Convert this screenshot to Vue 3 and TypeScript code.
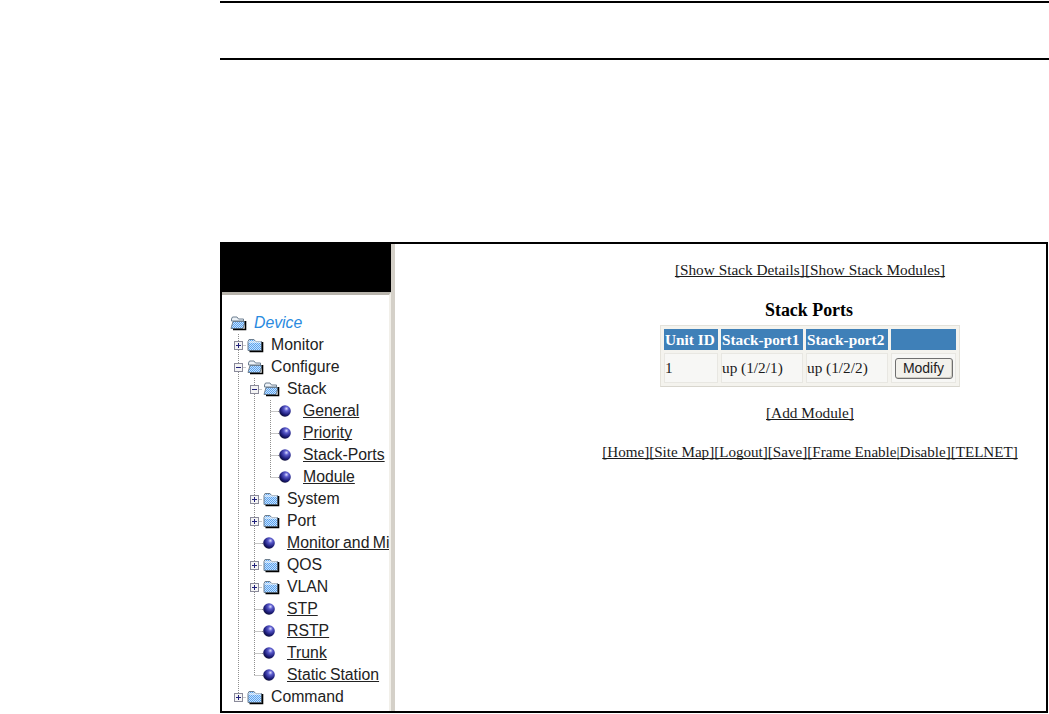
<script setup lang="ts">
type Kind = 'root' | 'plus' | 'minus' | 'leaf'

interface TreeRow {
  label: string
  depth: number
  kind: Kind
  last?: boolean
}

const rows: TreeRow[] = [
  { label: 'Device', depth: 0, kind: 'root' },
  { label: 'Monitor', depth: 0, kind: 'plus' },
  { label: 'Configure', depth: 0, kind: 'minus' },
  { label: 'Stack', depth: 1, kind: 'minus' },
  { label: 'General', depth: 2, kind: 'leaf' },
  { label: 'Priority', depth: 2, kind: 'leaf' },
  { label: 'Stack-Ports', depth: 2, kind: 'leaf' },
  { label: 'Module', depth: 2, kind: 'leaf', last: true },
  { label: 'System', depth: 1, kind: 'plus' },
  { label: 'Port', depth: 1, kind: 'plus' },
  { label: 'Monitor and Mi', depth: 1, kind: 'leaf' },
  { label: 'QOS', depth: 1, kind: 'plus' },
  { label: 'VLAN', depth: 1, kind: 'plus' },
  { label: 'STP', depth: 1, kind: 'leaf' },
  { label: 'RSTP', depth: 1, kind: 'leaf' },
  { label: 'Trunk', depth: 1, kind: 'leaf' },
  { label: 'Static Station', depth: 1, kind: 'leaf', last: true },
  { label: 'Command', depth: 0, kind: 'plus', last: true },
]

const topLinks = ['[Show Stack Details]', '[Show Stack Modules]']
const bottomLinks = ['[Home]', '[Site Map]', '[Logout]', '[Save]', '[Frame Enable', '|', 'Disable]', '[TELNET]']
</script>

<template>
  <div class="page">
    <div class="rule rule--top"></div>
    <div class="rule rule--second"></div>

    <svg class="defs" width="0" height="0" aria-hidden="true">
      <defs>
        <pattern id="dither" width="2" height="2" patternUnits="userSpaceOnUse">
          <rect width="2" height="2" fill="#5aa2ee" />
          <rect width="1" height="1" fill="#c6e1fd" />
          <rect x="1" y="1" width="1" height="1" fill="#c6e1fd" />
        </pattern>
        <radialGradient id="ball" cx="0.62" cy="0.3" r="0.8">
          <stop offset="0" stop-color="#dcdcff" />
          <stop offset="0.25" stop-color="#5a5acc" />
          <stop offset="0.65" stop-color="#1c1c78" />
          <stop offset="1" stop-color="#03031a" />
        </radialGradient>
      </defs>
    </svg>

    <div class="frame">
      <aside class="side">
        <div class="side__banner"></div>
        <div class="side__tree">
          <div v-for="row in rows" :key="row.label" class="tree-row" :class="{ 'tree-row--root': row.kind === 'root' }">
            <svg v-for="n in row.depth" :key="n" class="cell" width="16" height="22">
              <line x1="8.5" y1="0" x2="8.5" y2="22" class="dots" />
            </svg>

            <svg v-if="row.kind !== 'root'" class="cell" width="16" height="22">
              <line x1="8.5" y1="0" :y2="row.last ? 11 : 22" x2="8.5" class="dots" />
              <line x1="8.5" y1="11.5" x2="16" y2="11.5" class="dots" />
              <template v-if="row.kind !== 'leaf'">
                <rect x="4.5" y="7.5" width="8" height="8" fill="#f4f4f4" stroke="#8a8a9a" />
                <line x1="6" y1="11.5" x2="11" y2="11.5" stroke="#20207a" />
                <line v-if="row.kind === 'plus'" x1="8.5" y1="9" x2="8.5" y2="14" stroke="#20207a" />
              </template>
            </svg>

            <svg v-if="row.kind === 'leaf'" class="icon" width="16" height="22">
              <line x1="-1" y1="11.5" x2="1" y2="11.5" class="dots" />
              <circle cx="6" cy="11" r="5.8" fill="url(#ball)" />
            </svg>
            <svg v-else-if="row.kind === 'plus'" class="icon" width="16" height="22">
              <path d="M1 7.5 L2 5.5 H7 L8.5 7.5 H14.5 V16.5 H1 Z" fill="url(#dither)" stroke="#6d7f90" />
              <path d="M1.5 8 H14" stroke="#fff" />
              <path d="M15.5 8 V17.5 H2.5" fill="none" stroke="#000" stroke-width="1.6" />
            </svg>
            <svg v-else class="icon" width="16" height="22">
              <path d="M1.5 7 L2.5 5 H7 L8.5 7 H13.5 V9 H1.5 Z" fill="#eef3f8" stroke="#6d7f90" />
              <path d="M3 9.5 H15 L13 16.5 H1 Z" fill="url(#dither)" stroke="#6d7f90" />
              <path d="M15.5 9 V17.5 H3" fill="none" stroke="#000" stroke-width="1.6" />
            </svg>

            <span class="label" :class="{ 'label--link': row.kind === 'leaf', 'label--root': row.kind === 'root' }">{{ row.label }}</span>
          </div>
        </div>
      </aside>

      <main class="main">
        <div class="main__column">
          <p class="links links--top">
            <a v-for="link in topLinks" :key="link" href="#">{{ link }}</a>
          </p>

          <h2 class="title">Stack Ports</h2>

          <table class="ports">
            <thead>
              <tr>
                <th class="col-unit">Unit ID</th>
                <th class="col-port">Stack-port1</th>
                <th class="col-port">Stack-port2</th>
                <th class="col-action"></th>
              </tr>
            </thead>
            <tbody>
              <tr>
                <td>1</td>
                <td>up (1/2/1)</td>
                <td>up (1/2/2)</td>
                <td class="action"><button type="button">Modify</button></td>
              </tr>
            </tbody>
          </table>

          <p class="links links--add"><a href="#">[Add Module]</a></p>

          <p class="links links--bottom">
            <a v-for="link in bottomLinks" :key="link" href="#">{{ link }}</a>
          </p>
        </div>
      </main>
    </div>
  </div>
</template>

<style scoped>
.page {
  width: 1049px;
  height: 714px;
  overflow: hidden;
  padding: 1px 0 0 220px;
  box-sizing: border-box;
  background: #fff;
}

.rule {
  height: 2px;
  background: #000;
}

.rule--second {
  margin-top: 55px;
}

.defs {
  display: block;
}

.frame {
  width: 828px;
  height: 471px;
  margin-top: 182px;
  box-sizing: border-box;
  border: 2px solid #000;
  display: flex;
}

.side {
  width: 169px;
  flex: none;
  display: flex;
  flex-direction: column;
  border-right: 4px solid #d4d0c8;
}

.side__banner {
  height: 48px;
  background: #000;
  flex: none;
}

.side__tree {
  flex: 1;
  border-top: 3px solid #b8b4ac;
  border-right: 2px solid #f1efe9;
  padding: 17px 0 0 8px;
  overflow: hidden;
}

.tree-row {
  display: flex;
  align-items: center;
  height: 22px;
  white-space: nowrap;
}

.cell,
.icon {
  flex: none;
  display: block;
  overflow: visible;
}

.icon {
  margin-left: 1px;
}

.tree-row--root .icon {
  margin-left: 0;
}

.dots {
  stroke: #8f8f8f;
  stroke-dasharray: 1 1;
}

.label {
  margin-left: 8px;
  font: 15.8px "Liberation Sans", Arial, sans-serif;
  word-spacing: -1px;
  color: #222;
}

.label--link {
  text-decoration: underline;
  text-decoration-skip-ink: none;
}

.label--root {
  font-style: italic;
  color: #2a8ae0;
}

.main {
  flex: 1;
  padding-left: 195px;
  font-family: "Liberation Serif", "Times New Roman", serif;
  color: #1a1a1a;
}

.main__column {
  width: 440px;
  display: flex;
  flex-direction: column;
  align-items: center;
}

.links {
  margin: 0;
  font-size: 15.3px;
  line-height: 18px;
  white-space: nowrap;
}

.links a {
  color: inherit;
  text-decoration: underline;
  text-decoration-skip-ink: none;
}

.links--top {
  margin-top: 17px;
}

.title {
  margin: 21px 2px 0 0;
  font-size: 17.9px;
  line-height: 20px;
  font-weight: bold;
  color: #000;
}

.ports {
  margin-top: 5px;
  border-collapse: separate;
  border-spacing: 3px;
  border: 1px solid #e4e2da;
  border-bottom: 1px solid #d8d6ce;
  font-size: 15.3px;
  background: #f4f3ee;
}

.ports th {
  height: 21px;
  padding: 0 2px 0 1px;
  background: #3f80b8;
  color: #fff;
  font-weight: bold;
  text-align: left;
  white-space: nowrap;
}

.ports td {
  height: 30px;
  padding: 0;
  background: #f7f7f5;
  border: 1px solid #e8e7e2;
  box-sizing: border-box;
  white-space: nowrap;
}

.col-unit {
  width: 51px;
}

.col-port {
  width: 79px;
}

.col-action {
  width: 62px;
}

.ports td.action {
  text-align: center;
}

button {
  width: 58px;
  height: 21px;
  padding: 0;
  font: 14px "Liberation Sans", Arial, sans-serif;
  color: #222;
  background: #f2f1ec;
  border: 1px solid #6f6f6f;
  border-radius: 3px;
  box-shadow: inset -1px -1px 0 #cfcdc4;
}

.links--add {
  margin-top: 17px;
}

.links--bottom {
  margin-top: 21px;
  font-size: 15.1px;
}
</style>

<style>
html,
body {
  margin: 0;
  background: #fff;
}
</style>
